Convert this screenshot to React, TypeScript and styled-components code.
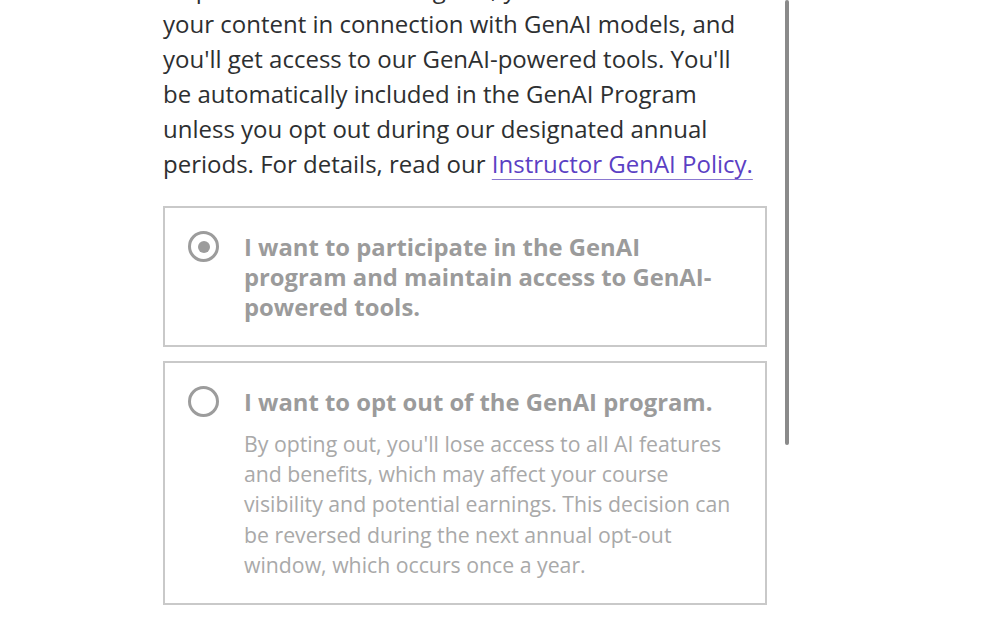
import React from 'react';
import styled, { createGlobalStyle } from 'styled-components';

const GlobalStyle = createGlobalStyle`
  html, body {
    margin: 0;
    padding: 0;
    background: #ffffff;
  }
  body {
    font-family: 'Open Sans', Roboto, 'Liberation Sans', Arial, sans-serif;
    overflow: hidden;
  }
`;

const Viewport = styled.div`
  position: relative;
  width: 1000px;
  height: 625px;
  overflow: hidden;
`;

const Column = styled.div`
  width: 604px;
  margin-left: 163px;
  margin-top: -29px;
  display: flex;
  flex-direction: column;
  gap: 14px;
`;

const Intro = styled.p`
  max-width: 598px;
  margin: 0 0 11px;
  font-size: 24px;
  line-height: 35px;
  color: #2d2f31;
`;

const PolicyLink = styled.a`
  color: #5b3fc4;
  text-decoration: underline;
  text-decoration-thickness: 1px;
  text-underline-offset: 6px;
  text-decoration-color: #8a78d0;
`;

const OptionCard = styled.label`
  display: flex;
  gap: 25px;
  padding: 24px 24px 23px 23px;
  border: 2px solid #c9c9c9;
  cursor: pointer;
`;

const Radio = styled.span<{ $checked?: boolean }>`
  flex: none;
  box-sizing: border-box;
  width: 31px;
  height: 31px;
  margin-top: -1px;
  border-radius: 50%;
  border: 3px solid #9c9c9c;
  display: flex;
  align-items: center;
  justify-content: center;

  &::after {
    content: '';
    width: 12px;
    height: 12px;
    border-radius: 50%;
    background: ${p => (p.$checked ? '#9c9c9c' : 'transparent')};
  }
`;

const OptionText = styled.div`
  display: flex;
  flex-direction: column;
  gap: 12px;
`;

const OptionTitle = styled.div`
  font-size: 23.8px;
  font-weight: 700;
  line-height: 30px;
  color: #9b9b9b;
`;

const OptionNote = styled.div`
  font-size: 21.25px;
  line-height: 30.2px;
  color: #a9a9a9;
`;

const ScrollThumb = styled.div`
  position: absolute;
  left: 785px;
  top: 0;
  width: 4px;
  height: 445px;
  border-radius: 2px;
  background: #8a8a8a;
`;

export default function App() {
  return (
    <Viewport>
      <GlobalStyle />
      <Column>
        <Intro>
          As part of the GenAI Program, you allow us to use your content in connection with GenAI models, and
          you'll get access to our GenAI-powered tools. You'll be automatically included in the GenAI Program unless
          you opt out during our designated annual periods. For details, read our{' '}
          <PolicyLink href="#">Instructor GenAI Policy.</PolicyLink>
        </Intro>
        <OptionCard>
          <Radio $checked />
          <OptionText>
            <OptionTitle>I want to participate in the GenAI program and maintain access to GenAI-powered tools.</OptionTitle>
          </OptionText>
        </OptionCard>
        <OptionCard>
          <Radio />
          <OptionText>
            <OptionTitle>I want to opt out of the GenAI program.</OptionTitle>
            <OptionNote>
              By opting out, you'll lose access to all AI features and benefits, which may affect your course
              visibility and potential earnings. This decision can be reversed during the next annual opt-out window,
              which occurs once a year.
            </OptionNote>
          </OptionText>
        </OptionCard>
      </Column>
      <ScrollThumb />
    </Viewport>
  );
}
